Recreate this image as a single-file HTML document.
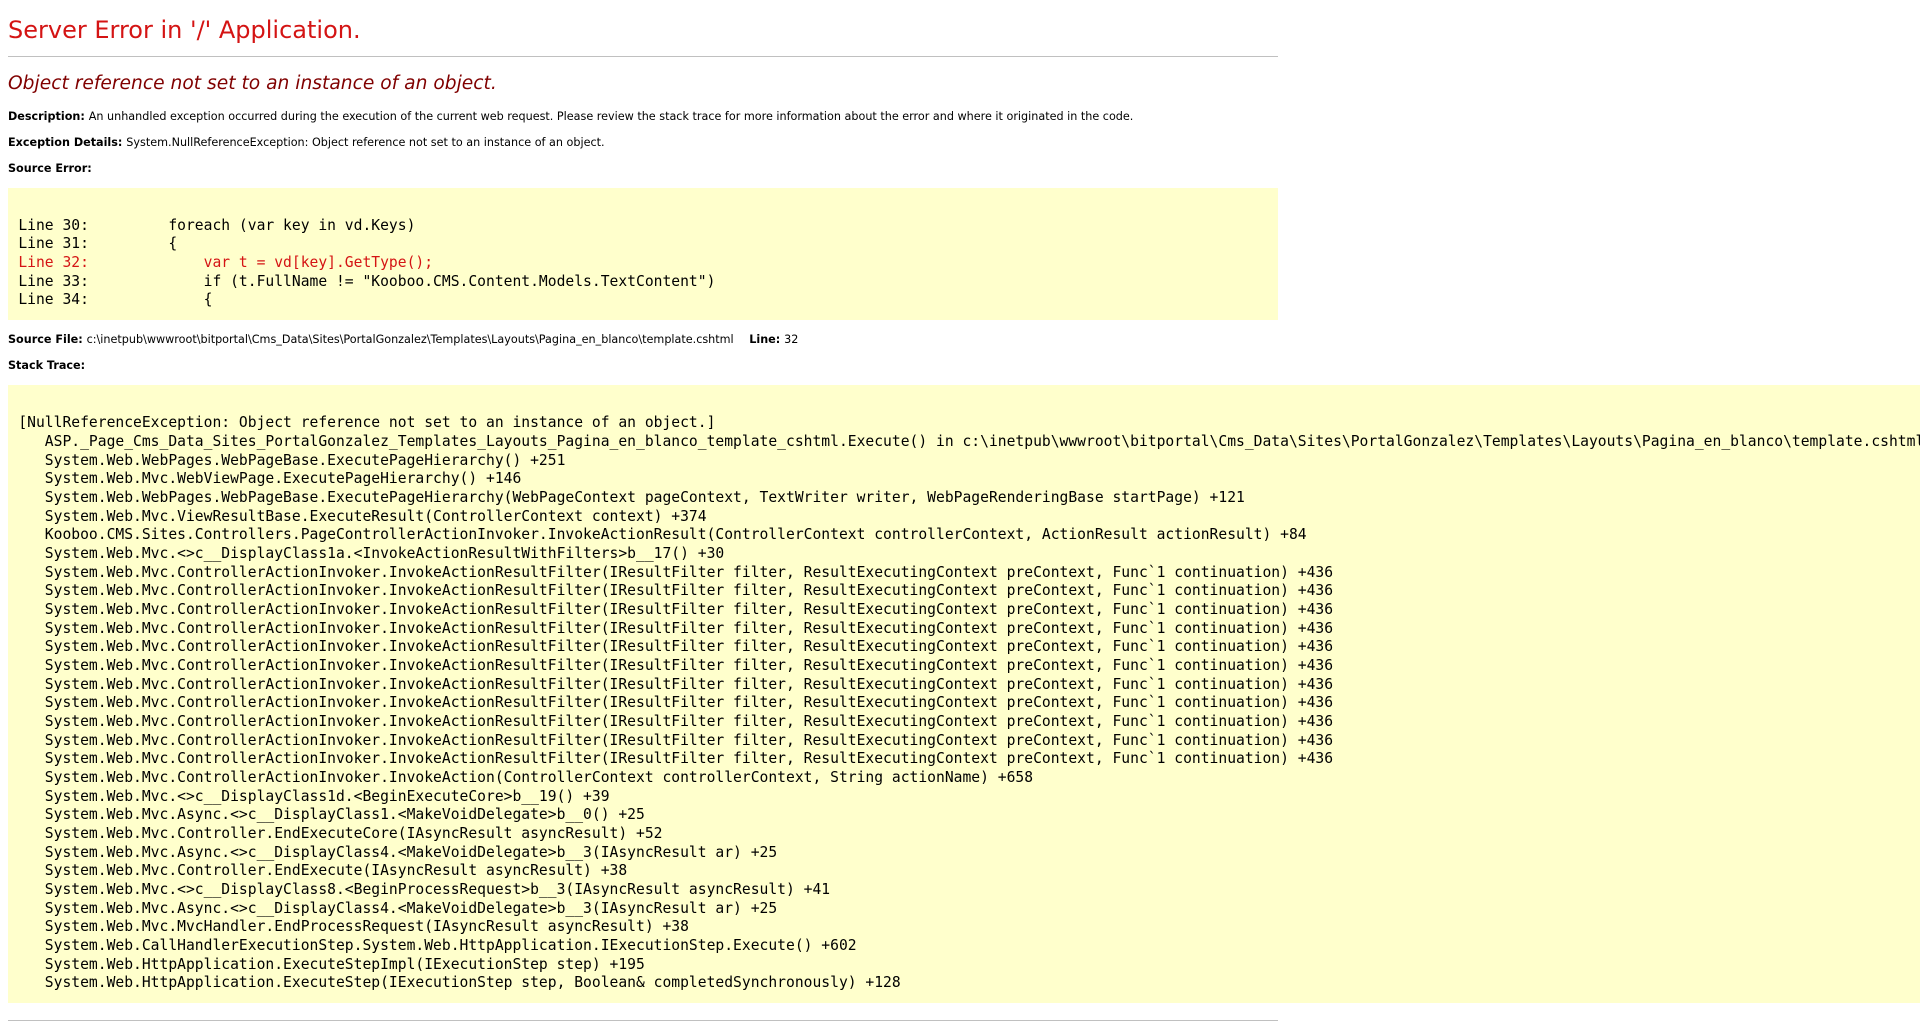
<!DOCTYPE html>
<html><head><meta charset="utf-8"><title>Object reference not set to an instance of an object.</title>
<style>
html{background:#fff}
body{font-family:"DejaVu Sans",Verdana,sans-serif;font-weight:normal;font-size:11.2px;color:black;margin:8px;width:1270px;overflow:visible}
p{font-family:"DejaVu Sans",sans-serif;font-weight:normal;color:black;margin-top:-5px}
b{font-family:"DejaVu Sans",sans-serif;font-weight:bold;color:black;margin-top:-5px}
h1{font-family:"DejaVu Sans",sans-serif;font-weight:normal;font-size:18pt;color:#d41414;margin:0.67em 0 16px}
h2{font-family:"DejaVu Sans",sans-serif;font-weight:normal;font-size:14pt;color:maroon;margin:0 0 0.83em}
h2 i{font-style:italic}
pre{font-family:"DejaVu Sans Mono","Liberation Mono",monospace;font-size:11pt;margin:0;padding:0.5em;line-height:14pt}
hr{border:0;border-top:1px solid silver;height:0;margin:12px 0 8px;width:100%}
hr.last{margin-top:4px}
table{border-spacing:2px}
td{padding:1px}
span.err{color:#d41414}
</style></head>
<body bgcolor="white">
<span><h1>Server Error in '/' Application.<hr width="100%" size="1" color="silver"></h1>
<h2><i>Object reference not set to an instance of an object.</i></h2></span>
<b>Description: </b>An unhandled exception occurred during the execution of the current web request. Please review the stack trace for more information about the error and where it originated in the code.
<br><br>
<b>Exception Details: </b>System.NullReferenceException: Object reference not set to an instance of an object.<br><br>
<b>Source Error:</b> <br><br>
<table width="100%" bgcolor="#ffffcc"><tr><td><code><pre>

Line 30:         foreach (var key in vd.Keys)
Line 31:         {
<span class="err">Line 32:             var t = vd[key].GetType();</span>
Line 33:             if (t.FullName != "Kooboo.CMS.Content.Models.TextContent")
Line 34:             {</pre></code></td></tr></table>
<br>
<b>Source File: </b> c:\inetpub\wwwroot\bitportal\Cms_Data\Sites\PortalGonzalez\Templates\Layouts\Pagina_en_blanco\template.cshtml<b> &nbsp;&nbsp; Line: </b> 32
<br><br>
<b>Stack Trace:</b> <br><br>
<table width="100%" bgcolor="#ffffcc"><tr><td><code><pre>

[NullReferenceException: Object reference not set to an instance of an object.]
   ASP._Page_Cms_Data_Sites_PortalGonzalez_Templates_Layouts_Pagina_en_blanco_template_cshtml.Execute() in c:\inetpub\wwwroot\bitportal\Cms_Data\Sites\PortalGonzalez\Templates\Layouts\Pagina_en_blanco\template.cshtml:32
   System.Web.WebPages.WebPageBase.ExecutePageHierarchy() +251
   System.Web.Mvc.WebViewPage.ExecutePageHierarchy() +146
   System.Web.WebPages.WebPageBase.ExecutePageHierarchy(WebPageContext pageContext, TextWriter writer, WebPageRenderingBase startPage) +121
   System.Web.Mvc.ViewResultBase.ExecuteResult(ControllerContext context) +374
   Kooboo.CMS.Sites.Controllers.PageControllerActionInvoker.InvokeActionResult(ControllerContext controllerContext, ActionResult actionResult) +84
   System.Web.Mvc.&lt;&gt;c__DisplayClass1a.&lt;InvokeActionResultWithFilters&gt;b__17() +30
   System.Web.Mvc.ControllerActionInvoker.InvokeActionResultFilter(IResultFilter filter, ResultExecutingContext preContext, Func`1 continuation) +436
   System.Web.Mvc.ControllerActionInvoker.InvokeActionResultFilter(IResultFilter filter, ResultExecutingContext preContext, Func`1 continuation) +436
   System.Web.Mvc.ControllerActionInvoker.InvokeActionResultFilter(IResultFilter filter, ResultExecutingContext preContext, Func`1 continuation) +436
   System.Web.Mvc.ControllerActionInvoker.InvokeActionResultFilter(IResultFilter filter, ResultExecutingContext preContext, Func`1 continuation) +436
   System.Web.Mvc.ControllerActionInvoker.InvokeActionResultFilter(IResultFilter filter, ResultExecutingContext preContext, Func`1 continuation) +436
   System.Web.Mvc.ControllerActionInvoker.InvokeActionResultFilter(IResultFilter filter, ResultExecutingContext preContext, Func`1 continuation) +436
   System.Web.Mvc.ControllerActionInvoker.InvokeActionResultFilter(IResultFilter filter, ResultExecutingContext preContext, Func`1 continuation) +436
   System.Web.Mvc.ControllerActionInvoker.InvokeActionResultFilter(IResultFilter filter, ResultExecutingContext preContext, Func`1 continuation) +436
   System.Web.Mvc.ControllerActionInvoker.InvokeActionResultFilter(IResultFilter filter, ResultExecutingContext preContext, Func`1 continuation) +436
   System.Web.Mvc.ControllerActionInvoker.InvokeActionResultFilter(IResultFilter filter, ResultExecutingContext preContext, Func`1 continuation) +436
   System.Web.Mvc.ControllerActionInvoker.InvokeActionResultFilter(IResultFilter filter, ResultExecutingContext preContext, Func`1 continuation) +436
   System.Web.Mvc.ControllerActionInvoker.InvokeAction(ControllerContext controllerContext, String actionName) +658
   System.Web.Mvc.&lt;&gt;c__DisplayClass1d.&lt;BeginExecuteCore&gt;b__19() +39
   System.Web.Mvc.Async.&lt;&gt;c__DisplayClass1.&lt;MakeVoidDelegate&gt;b__0() +25
   System.Web.Mvc.Controller.EndExecuteCore(IAsyncResult asyncResult) +52
   System.Web.Mvc.Async.&lt;&gt;c__DisplayClass4.&lt;MakeVoidDelegate&gt;b__3(IAsyncResult ar) +25
   System.Web.Mvc.Controller.EndExecute(IAsyncResult asyncResult) +38
   System.Web.Mvc.&lt;&gt;c__DisplayClass8.&lt;BeginProcessRequest&gt;b__3(IAsyncResult asyncResult) +41
   System.Web.Mvc.Async.&lt;&gt;c__DisplayClass4.&lt;MakeVoidDelegate&gt;b__3(IAsyncResult ar) +25
   System.Web.Mvc.MvcHandler.EndProcessRequest(IAsyncResult asyncResult) +38
   System.Web.CallHandlerExecutionStep.System.Web.HttpApplication.IExecutionStep.Execute() +602
   System.Web.HttpApplication.ExecuteStepImpl(IExecutionStep step) +195
   System.Web.HttpApplication.ExecuteStep(IExecutionStep step, Boolean&amp; completedSynchronously) +128
</pre></code></td></tr></table>
<br>
<hr class="last" width="100%" size="1" color="silver">
</body></html>
